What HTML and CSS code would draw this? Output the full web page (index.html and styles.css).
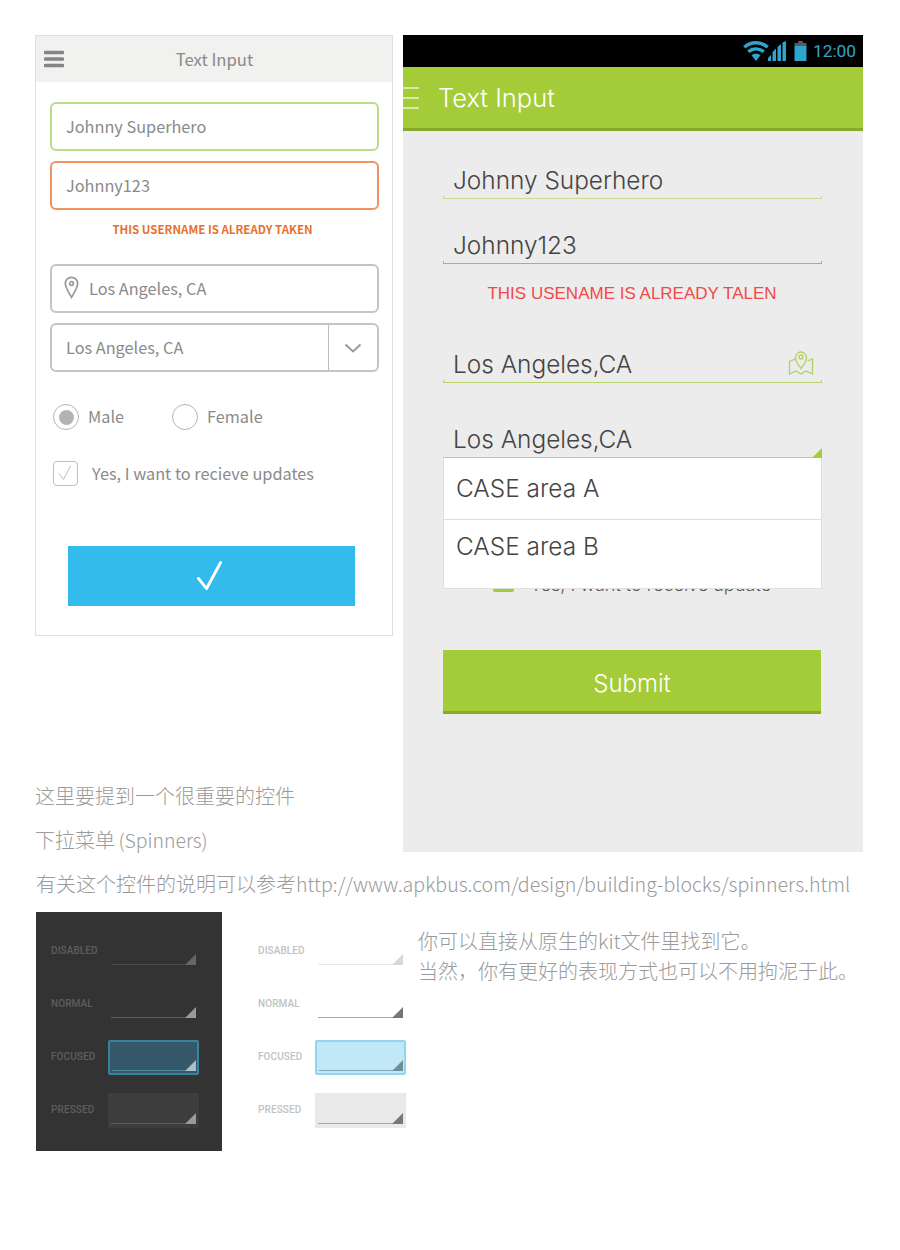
FILE: index.html
```html
<!DOCTYPE html>
<html lang="zh">
<head>
<meta charset="utf-8">
<title>Text Input</title>
<link rel="stylesheet" href="styles.css">
</head>
<body>
<div class="top">
  <div class="left-col">
    <section class="card">
      <header class="card-head">
        <svg class="burger" viewBox="0 0 20 18"><path d="M1.500 2.500h17M1.500 9h17M1.500 15.500h17"/></svg>
        <span>Text Input</span>
      </header>
      <div class="card-body">
        <div class="input ok">Johnny Superhero</div>
        <div class="input bad">Johnny123</div>
        <div class="card-error">THIS USERNAME IS ALREADY TAKEN</div>
        <div class="input plain with-pin">
          <svg class="pin" viewBox="0 0 16 24"><path d="M8 1.200c-3.800 0-6.600 2.800-6.600 6.500C1.400 12 5.500 18 8 22.500 10.500 18 14.600 12 14.600 7.700 14.600 4 11.800 1.200 8 1.200z"/><circle cx="8" cy="7.800" r="2"/></svg>
          Los Angeles, CA
        </div>
        <div class="input plain select">
          <span class="select-text">Los Angeles, CA</span>
          <span class="select-btn"><svg viewBox="0 0 18 10"><path d="M1.500 1.500 9 8.500l7.500-7"/></svg></span>
        </div>
        <div class="radios">
          <span class="radio on"></span><span class="radio-label male">Male</span>
          <span class="radio"></span><span class="radio-label">Female</span>
        </div>
        <div class="check-row">
          <span class="check"><svg viewBox="0 0 22 22"><path d="M5 11.500l4.500 6L16.500 4"/></svg></span>
          <span>Yes, I want to recieve updates</span>
        </div>
        <div class="card-submit"><svg viewBox="0 0 28 32"><path d="M2.500 18.500 11 29 25.500 2"/></svg></div>
      </div>
    </section>
    <p class="note">这里要提到一个很重要的控件</p>
    <p class="note">下拉菜单 <span class="latin-s">(Spinners)</span></p>
  </div>

  <section class="phone">
    <div class="status">
      <svg class="wifi" viewBox="0 0 26 20"><path d="M13 20 8.500 14.200a7 7 0 0 1 9 0z"/><path class="arc" d="M5.300 10.800a11.500 11.500 0 0 1 15.400 0M1.300 6.300a17.500 17.500 0 0 1 23.400 0"/></svg>
      <svg class="signal" viewBox="0 0 18 20"><path d="M0 20v-3l3-3v6zM4.500 20v-9l3.500-3.500V20zM9.500 20V6l3.500-3v17zM14.500 20V1.500L18 0v20z"/></svg>
      <svg class="battery" viewBox="0 0 12 20"><path class="batt-cap" d="M3.500 0h5v2h-5zM0 2h12v3H0z"/><path d="M0 5h12v15H0z"/></svg>
      <span class="clock">12:00</span>
    </div>
    <header class="appbar">
      <svg class="appbar-menu" viewBox="0 0 16 22"><path d="M0 1h16M0 11h16M0 21h16"/></svg>
      <span>Text Input</span>
    </header>
    <div class="form">
      <div class="field f-ok"><div class="field-text">Johnny Superhero</div><div class="field-line"></div></div>
      <div class="field f-bad"><div class="field-text">Johnny123</div><div class="field-line"></div></div>
      <div class="form-error">THIS USENAME IS ALREADY TALEN</div>
      <div class="field f-ok strong f-map">
        <div class="field-text">Los Angeles,CA</div>
        <svg class="map" viewBox="0 0 26 26"><path d="M7.500 10 1.500 12.500v12.500l6.500-3 5 3 5-3 6.500 3V10l-5 2"/><path d="M13 19.500c-2.500-3.500-5.500-6.500-5.500-11a5.500 5.500 0 0 1 11 0c0 4.500-3 7.500-5.500 11z"/><circle cx="13" cy="8" r="2"/></svg>
        <div class="field-line"></div>
      </div>
      <div class="field f-ok strong spinner">
        <div class="field-text">Los Angeles,CA</div>
        <div class="field-line solid"></div>
        <span class="corner"></span>
        <ul class="menu">
          <li>CASE area A</li>
          <li>CASE area B</li>
        </ul>
      </div>
      <div class="hidden-check"><span class="green-box"></span><span class="hidden-text">Yes, I want to receive update</span></div>
      <div class="phone-submit">Submit</div>
    </div>
  </section>
</div>

<p class="note url">有关这个控件的说明可以参考<span class="latin-u">http://www.apkbus.com/design/building-blocks/spinners.html</span></p>

<div class="bottom">
  <div class="kit dark">
    <div class="kit-row"><span class="kit-label">DISABLED</span><span class="spin disabled"></span></div>
    <div class="kit-row"><span class="kit-label">NORMAL</span><span class="spin normal"></span></div>
    <div class="kit-row"><span class="kit-label">FOCUSED</span><span class="spin focused"></span></div>
    <div class="kit-row"><span class="kit-label">PRESSED</span><span class="spin pressed"></span></div>
  </div>
  <div class="kit light">
    <div class="kit-row"><span class="kit-label">DISABLED</span><span class="spin disabled"></span></div>
    <div class="kit-row"><span class="kit-label">NORMAL</span><span class="spin normal"></span></div>
    <div class="kit-row"><span class="kit-label">FOCUSED</span><span class="spin focused"></span></div>
    <div class="kit-row"><span class="kit-label">PRESSED</span><span class="spin pressed"></span></div>
  </div>
  <div class="aside">
    <p>你可以直接从原生的kit文件里找到它。</p>
    <p>当然，你有更好的表现方式也可以不用拘泥于此。</p>
  </div>
</div>
</body>
</html>
```
FILE: styles.css
```css
* { box-sizing: border-box; }
html, body { margin: 0; padding: 0; background: #fff; }
body {
  width: 900px;
  height: 1250px;
  overflow: hidden;
  padding-top: 35px;
  font-family: "Noto Sans CJK SC", "Noto Sans", sans-serif;
}
p { margin: 0; }
ul { margin: 0; padding: 0; list-style: none; }

.top { display: flex; align-items: flex-start; height: 827px; padding-left: 35px; }
.left-col { width: 358px; margin-right: 10px; }

/* left mock */
.card { height: 601px; width: 358px; border: 1px solid #dedede; margin-bottom: 138px; }
.card-head {
  position: relative;
  height: 46px;
  background: #f1f1ef;
  display: flex;
  align-items: center;
  justify-content: center;
  color: #8a8a8a;
  font-size: 16.700px;
  padding-left: 1px;
}
.burger { position: absolute; left: 8px; top: 14px; width: 20px; height: 18px; fill: none; stroke: #858585; stroke-width: 3.600; stroke-linecap: round; }
.card-body { padding: 20px 13px 0 14px; }
.input {
  height: 49px;
  border-radius: 6px;
  border: 2px solid #c4c4c4;
  margin-bottom: 10px;
  padding: 0 0 2px 14px;
  display: flex;
  align-items: center;
  font-size: 16.300px;
  color: #8a8a8a;
}
.input.ok { border-color: #bcdb86; }
.input.bad { border-color: #f09360; margin-bottom: 0; }
.card-error { height: 54px; padding-top: 9px; line-height: 20px; text-align: center; font-size: 11.500px; font-weight: 700; color: #e9702c; padding-right: 4px; }
.with-pin { padding-left: 12px; gap: 10px; }
.pin { width: 15px; height: 23px; fill: none; stroke: #999; stroke-width: 1.800; }
.select { padding: 0; justify-content: space-between; }
.select-text { padding: 0 0 2px 14px; }
.select-btn { width: 49px; height: 100%; border-left: 1px solid #bbb; display: flex; align-items: center; justify-content: center; }
.select-btn svg { width: 18px; height: 10px; fill: none; stroke: #999; stroke-width: 2; }
.radios { display: flex; align-items: center; height: 26px; margin: 32px 0 0 3px; font-size: 16.300px; color: #8a8a8a; }
.radio { width: 26px; height: 26px; border-radius: 50%; border: 1.500px solid #b5b5b5; flex: none; display: flex; align-items: center; justify-content: center; }
.radio.on::after { content: ""; width: 15px; height: 15px; border-radius: 50%; background: #b3b3b3; }
.radio-label { margin-left: 9px; padding-bottom: 2px; }
.male { width: 84px; }
.check-row { display: flex; align-items: center; margin: 30px 0 0 3px; height: 26px; font-size: 16.300px; color: #8a8a8a; }
.check { width: 25px; height: 25px; border: 1.500px solid #c0c0c0; border-radius: 4px; margin-right: 14px; flex: none; display: block; }
.check svg { display: block; width: 22px; height: 22px; fill: none; stroke: #bdbdbd; stroke-width: 1; }
.card-submit { width: 287px; height: 60px; margin: 60px 0 0 18px; padding-right: 4px; background: #33bbee; display: flex; align-items: center; justify-content: center; }
.card-submit svg { width: 27px; height: 32px; fill: none; stroke: #fff; stroke-width: 3; stroke-linecap: round; stroke-linejoin: round; }

/* notes */
.note { font-size: 20px; line-height: 44px; font-weight: 300; color: #9a9a9a; white-space: nowrap; }
.latin-s { font-size: 19.400px; margin-left: -1px; }
.latin-u { font-size: 19.600px; }
.url { padding-left: 36px; height: 44px; }

/* phone */
.phone { width: 460px; height: 817px; background: #ececec; font-family: "Inter", "Liberation Sans", sans-serif; }
.status { height: 32px; background: #000; display: flex; align-items: center; padding: 0 7px 0 340px; color: #2fa4cf; }
.wifi { width: 26px; height: 20px; fill: #2fa4cf; }
.wifi .arc { fill: none; stroke: #2fa4cf; stroke-width: 3.400; }
.signal { width: 18px; height: 20px; fill: #2fa4cf; margin-left: -1px; }
.battery { width: 13px; height: 20px; fill: #2fa4cf; margin: 0 6px 0 8px; }
.batt-cap { fill: #5a5a5a; }
.clock { font-family: "Roboto", sans-serif; font-size: 17.300px; }
.appbar {
  position: relative;
  height: 64px;
  background: #a4cc38;
  border-bottom: 3px solid #89a92e;
  color: #fff;
  font-size: 25.500px;
  font-weight: 300;
  display: flex;
  align-items: center;
  padding: 0 0 0 35px;
  overflow: hidden;
}
.appbar-menu { width: 16px; height: 22px; position: absolute; left: 0; top: 20px; fill: none; stroke: #e9f3c8; stroke-width: 1.500; }
.form { padding: 29px 41px 0 40px; }
.field { position: relative; color: #444; }
.field + .field { margin-top: 26px; }
.spinner.field { margin-top: 36px; }
.field-text { height: 36px; line-height: 40px; font-size: 24.400px; font-weight: 300; padding-left: 10px; white-space: nowrap; }
.field-line { height: 3px; border: 1px solid #c9da92; border-top: 0; }
.f-bad .field-line { border-color: #ec8d8d; }
.strong .field-line { border-color: #b6d469; }
.solid { border-left: 0; border-right: 0; }
.form-error { height: 80px; padding-top: 18px; line-height: 24px; text-align: center; font-size: 17px; font-family: "Liberation Sans", sans-serif; color: #f0494a; padding-right: 1px; }
.map { position: absolute; right: 8px; top: 5px; width: 26px; height: 26px; fill: none; stroke: #b2d15f; stroke-width: 1.300; }
.corner { position: absolute; right: 0; bottom: 0; width: 0; height: 0; border-left: 10px solid transparent; border-bottom: 10px solid #a4cc38; }
.menu { position: absolute; left: 0; right: 0; top: 100%; height: 131px; background: #fff; border: 1px solid #e0e0e0; border-top: 0; z-index: 2; }
.menu li { height: 62px; line-height: 61px; font-size: 24.400px; font-weight: 300; padding-left: 12px; color: #444; border-bottom: 1px solid #dedede; }
.menu li:last-child { border-bottom: 0; height: 56px; line-height: 52px; }
.hidden-check { display: flex; align-items: center; height: 24px; margin-top: 111px; padding-left: 50px; font-size: 18px; font-weight: 300; color: #555; white-space: nowrap; }
.hidden-text { padding-top: 6px; }
.green-box { width: 21px; height: 22px; border-radius: 2px; background: #a4cc38; margin-right: 16px; }
.phone-submit { height: 64px; margin-top: 57px; background: #a4cc38; border-bottom: 3px solid #88ab22; color: #fff; font-size: 24px; font-weight: 300; text-align: center; line-height: 67px; margin-right: 1px; }

/* bottom row */
.bottom { display: flex; align-items: flex-start; margin-top: 6px; padding-left: 36px; }
.kit { height: 239px; padding: 22px 0 0 15px; font-family: "Roboto", "Liberation Sans", sans-serif; }
.dark { width: 186px; background: #333; color: #5e5e5e; }
.light { width: 163px; margin-left: 21px; color: #c2c2c2; }
.kit-row { display: flex; align-items: center; height: 35px; margin-bottom: 18px; }
.kit-label { width: 57px; font-size: 10px; font-weight: 500; letter-spacing: .1px; padding-bottom: 3px; }
.spin { position: relative; display: block; width: 91px; height: 35px; }
.spin::before { content: ""; position: absolute; left: 3px; right: 3px; bottom: 4px; height: 1px; background: var(--line); }
.spin::after { content: ""; position: absolute; right: 3px; bottom: 4px; width: 0; height: 0; border-left: 11px solid transparent; border-bottom: 11px solid var(--tri); }
.dark .spin { --line: #5f5f5f; --tri: #9a9a9a; }
.light .spin { --line: #a8a8a8; --tri: #777; }
.dark .disabled { --line: #4a4a4a; --tri: #666; }
.light .disabled { --line: #e6e6e6; --tri: #d8d8d8; }
.dark .focused { background: #35596a; border: 2px solid #38849f; --line: #4f8599; --tri: #a8c0c8; border-radius: 2px; }
.light .focused { background: #c2e8f8; border: 2px solid #92d5ee; --line: #7fa9ba; --tri: #6f8c99; border-radius: 2px; }
.focused.spin::before { left: 2px; right: 2px; bottom: 2px; }
.focused.spin::after { right: 1px; bottom: 2px; }
.dark .pressed { background: #3d3d3d; }
.light .pressed { background: #e9e9e9; }
.aside { margin-left: 12px; padding-top: 14px; font-size: 20px; line-height: 30px; font-weight: 300; color: #9a9a9a; white-space: nowrap; }
```
